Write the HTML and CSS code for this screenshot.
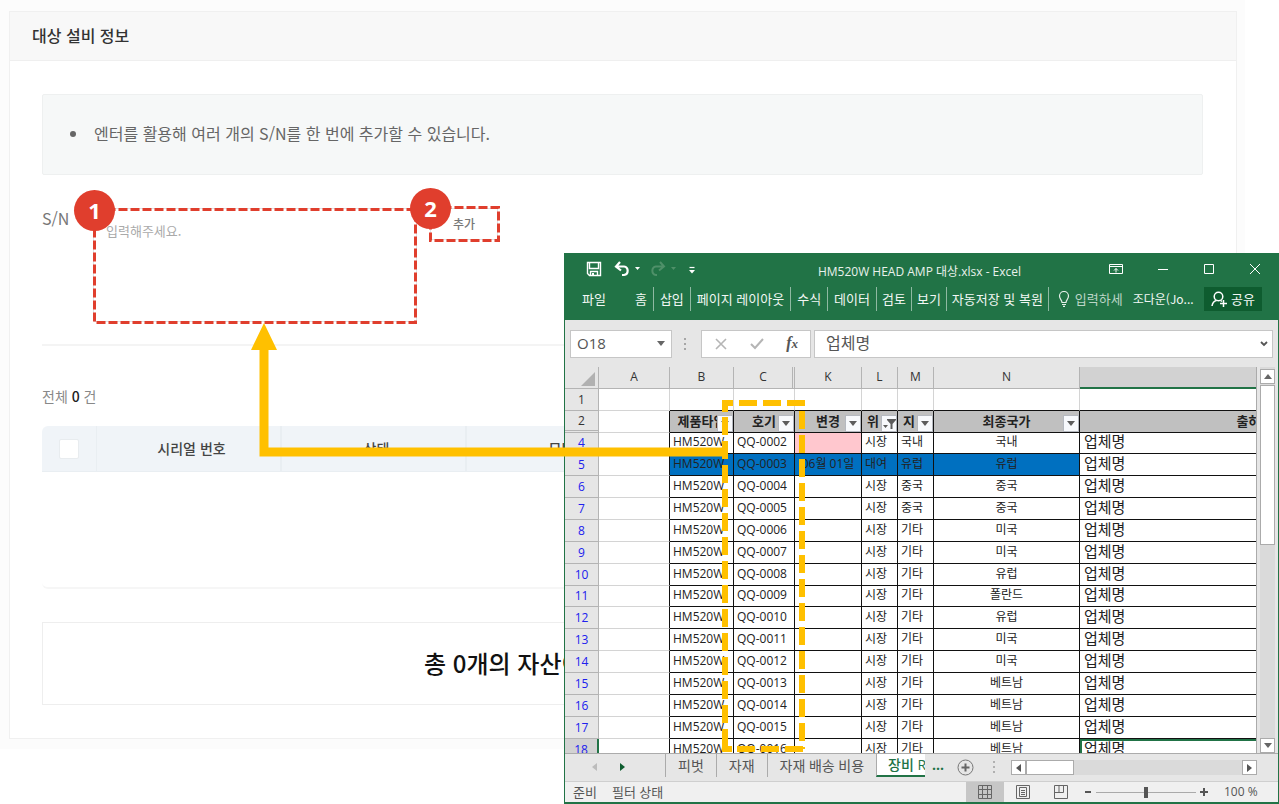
FILE: index.html
```html
<!DOCTYPE html>
<html lang="ko">
<head>
<meta charset="utf-8">
<title>대상 설비 정보</title>
<link rel="stylesheet" href="styles.css">
</head>
<body>
<main class="page">
  <section class="panel">
    <h1 class="panel-title">대상 설비 정보</h1>
    <div class="panel-body">
      <ul class="notice"><li>엔터를 활용해 여러 개의 S/N를 한 번에 추가할 수 있습니다.</li></ul>
      <div class="sn-row">
        <label class="sn-label" for="sn">S/N</label>
        <textarea class="sn-input" id="sn" placeholder="입력해주세요."></textarea>
        <button class="add-button" type="button">추가</button>
      </div>
      <p class="count">전체 <b>0</b> 건</p>
      <table class="assets">
        <thead>
          <tr><th class="check"><input type="checkbox" aria-label="전체 선택"></th><th>시리얼 번호</th><th>상태</th><th>모델</th><th class="rest"></th></tr>
        </thead>
        <tbody><tr><td colspan="5">데이터가 없습니다.</td></tr></tbody>
      </table>
      <p class="total">총 0개의 자산이</p>
    </div>
  </section>
</main>

<section class="excel" aria-label="Excel">
  <header class="ribbon">
    <div class="titlebar">
      <div class="quick">
        <button type="button" aria-label="저장"><svg width="16" height="16" viewBox="0 0 16 16"><path d="M1.500 1.500h13v13h-11l-2-2zM3.500 1.500v6h9v-6M4.500 14.500v-4h7v4" fill="none" stroke="#fff" stroke-width="1.400"/><path d="M6 12h2v3H6z" fill="#fff"/></svg></button>
        <button type="button" aria-label="실행 취소"><svg width="26" height="16" viewBox="0 0 26 16"><path d="M6 1L2 5.500l5 4M2.500 5.500H10a4.300 4.300 0 0 1 0 8.500H8" fill="none" stroke="#fff" stroke-width="2.200"/><path d="M21 6h5l-2.500 3z" fill="#fff"/></svg></button>
        <button type="button" aria-label="다시 실행" disabled><svg width="26" height="16" viewBox="0 0 26 16"><path d="M10 1l4 4.500-5 4M13.500 5.500H6A4.300 4.300 0 0 0 6 14h1" fill="none" stroke="#4f9069" stroke-width="2"/><path d="M21 6h5l-2.500 3z" fill="#4f9069"/></svg></button>
        <button type="button" aria-label="사용자 지정"><svg width="8" height="16" viewBox="0 0 8 16"><path d="M1.500 6.500h5" stroke="#fff" stroke-width="1.200"/><path d="M1 9h6l-3 3.500z" fill="#fff"/></svg></button>
      </div>
      <div class="doc-title">HM520W HEAD AMP 대상.xlsx - Excel</div>
      <div class="win-buttons">
        <button type="button" aria-label="리본 표시"><svg width="14" height="12" viewBox="0 0 14 12"><path d="M.5 1.500h13v9H.5zM.5 3.500h13M7 9.500v-4M5 7.500l2-2 2 2" fill="none" stroke="#fff"/></svg></button>
        <button type="button" aria-label="최소화"><svg width="12" height="12" viewBox="0 0 12 12"><path d="M1 6.500h10" stroke="#fff"/></svg></button>
        <button type="button" aria-label="최대화"><svg width="12" height="12" viewBox="0 0 12 12"><path d="M1.500 1.500h9v9h-9z" fill="none" stroke="#fff"/></svg></button>
        <button type="button" aria-label="닫기"><svg width="12" height="12" viewBox="0 0 12 12"><path d="M1 1l10 10M11 1L1 11" stroke="#fff"/></svg></button>
      </div>
    </div>
    <nav class="menus">
      <button class="file" type="button">파일</button>
      <button type="button">홈</button>
      <button type="button">삽입</button>
      <button type="button">페이지 레이아웃</button>
      <button type="button">수식</button>
      <button type="button">데이터</button>
      <button class="tight" type="button">검토</button>
      <button class="tight" type="button">보기</button>
      <button class="tight" type="button">자동저장 및 복원</button>
      <button class="tell" type="button"><svg width="12" height="16" viewBox="0 0 12 16"><path d="M4 11.500C4 9 1.500 8 1.500 5a4.500 4.500 0 0 1 9 0c0 3-2.500 4-2.500 6.500zM4 13.500h4M5 15.300h2" fill="none" stroke="#e6f0ea" stroke-width="1.200"/></svg>입력하세</button>
      <span class="user">조다운(Jo...</span>
      <button class="share" type="button"><svg width="16" height="16" viewBox="0 0 16 16"><circle cx="7.500" cy="5.500" r="4.300" fill="none" stroke="#fff" stroke-width="1.500"/><path d="M1 15c.5-3 2.200-5 4.500-5.500M9.500 9.500l1.500 1M9 12.500h7M12.500 9v7" fill="none" stroke="#fff" stroke-width="1.500"/></svg>공유</button>
    </nav>
  </header>

  <div class="formula">
    <div class="name-box"><input type="text" value="O18" aria-label="이름 상자"><svg width="8" height="5" viewBox="0 0 8 5"><path d="M0 0h8L4 5z" fill="#666"/></svg></div>
    <svg class="grip" width="3" height="12" viewBox="0 0 3 12"><path d="M0 0h2v2H0zM0 5h2v2H0zM0 10h2v2H0z" fill="#a6a6a6"/></svg>
    <div class="fx-box">
      <button type="button" aria-label="취소"><svg width="12" height="12" viewBox="0 0 12 12"><path d="M1 1l10 10M11 1L1 11" stroke="#b5b5b5" stroke-width="1.600"/></svg></button>
      <button type="button" aria-label="입력"><svg width="14" height="12" viewBox="0 0 14 12"><path d="M1 6l4 4 8-9" fill="none" stroke="#b5b5b5" stroke-width="2"/></svg></button>
      <button class="fx" type="button">f<small>x</small></button>
    </div>
    <div class="formula-input"><input type="text" value="업체명" aria-label="수식 입력줄"><svg width="8" height="6" viewBox="0 0 8 6"><path d="M1 1l3 3 3-3" fill="none" stroke="#555" stroke-width="1.800"/></svg></div>
  </div>

  <div class="sheet-area">
    <div class="sheet-view">
      <table class="sheet">
        <colgroup><col class="c-head"><col class="c-a"><col class="c-b"><col class="c-c"><col class="c-k"><col class="c-l"><col class="c-l"><col class="c-n"><col class="c-o"></colgroup>
        <thead>
          <tr><th class="corner"><svg width="14" height="14" viewBox="0 0 14 14"><path d="M14 0v14H0z" fill="#b1b1b1"/></svg></th><th>A</th><th>B</th><th class="folded">C</th><th>K</th><th>L</th><th>M</th><th>N</th><th class="chosen"></th></tr>
        </thead>
        <tbody>
          <tr class="blank"><th>1</th><td></td><td></td><td></td><td></td><td></td><td></td><td></td><td></td></tr>
          <tr class="titles"><th>2</th><td></td>
            <td>제품타입<button type="button" aria-label="필터"><svg width="8" height="5" viewBox="0 0 8 5"><path d="M0 0h8L4 5z"/></svg></button></td>
            <td>호기<button type="button" aria-label="필터"><svg width="8" height="5" viewBox="0 0 8 5"><path d="M0 0h8L4 5z"/></svg></button></td>
            <td>변경<button type="button" aria-label="필터"><svg width="8" height="5" viewBox="0 0 8 5"><path d="M0 0h8L4 5z"/></svg></button></td>
            <td class="narrow">위<button type="button" aria-label="필터 적용됨"><svg width="13" height="10" viewBox="0 0 13 10"><path d="M4 0h9v1L9.500 5v5H7.500V5L4 1zM0 6h5L2.500 9z"/></svg></button></td>
            <td class="narrow">지<button type="button" aria-label="필터"><svg width="8" height="5" viewBox="0 0 8 5"><path d="M0 0h8L4 5z"/></svg></button></td>
            <td>최종국가<button type="button" aria-label="필터"><svg width="8" height="5" viewBox="0 0 8 5"><path d="M0 0h8L4 5z"/></svg></button></td>
            <td>출하</td></tr>
          <tr class="short"><th>4</th><td></td><td>HM520W</td><td>QQ-0002</td><td class="pink"></td><td>시장</td><td>국내</td><td>국내</td><td>업체명</td></tr>
          <tr class="loan"><th>5</th><td></td><td>HM520W</td><td>QQ-0003</td><td>06월 01일</td><td>대여</td><td>유럽</td><td>유럽</td><td>업체명</td></tr>
          <tr><th>6</th><td></td><td>HM520W</td><td>QQ-0004</td><td></td><td>시장</td><td>중국</td><td>중국</td><td>업체명</td></tr>
          <tr><th>7</th><td></td><td>HM520W</td><td>QQ-0005</td><td></td><td>시장</td><td>중국</td><td>중국</td><td>업체명</td></tr>
          <tr><th>8</th><td></td><td>HM520W</td><td>QQ-0006</td><td></td><td>시장</td><td>기타</td><td>미국</td><td>업체명</td></tr>
          <tr><th>9</th><td></td><td>HM520W</td><td>QQ-0007</td><td></td><td>시장</td><td>기타</td><td>미국</td><td>업체명</td></tr>
          <tr><th>10</th><td></td><td>HM520W</td><td>QQ-0008</td><td></td><td>시장</td><td>기타</td><td>유럽</td><td>업체명</td></tr>
          <tr class="short"><th>11</th><td></td><td>HM520W</td><td>QQ-0009</td><td></td><td>시장</td><td>기타</td><td>폴란드</td><td>업체명</td></tr>
          <tr><th>12</th><td></td><td>HM520W</td><td>QQ-0010</td><td></td><td>시장</td><td>기타</td><td>유럽</td><td>업체명</td></tr>
          <tr><th>13</th><td></td><td>HM520W</td><td>QQ-0011</td><td></td><td>시장</td><td>기타</td><td>미국</td><td>업체명</td></tr>
          <tr><th>14</th><td></td><td>HM520W</td><td>QQ-0012</td><td></td><td>시장</td><td>기타</td><td>미국</td><td>업체명</td></tr>
          <tr><th>15</th><td></td><td>HM520W</td><td>QQ-0013</td><td></td><td>시장</td><td>기타</td><td>베트남</td><td>업체명</td></tr>
          <tr><th>16</th><td></td><td>HM520W</td><td>QQ-0014</td><td></td><td>시장</td><td>기타</td><td>베트남</td><td>업체명</td></tr>
          <tr><th>17</th><td></td><td>HM520W</td><td>QQ-0015</td><td></td><td>시장</td><td>기타</td><td>베트남</td><td>업체명</td></tr>
          <tr class="active-row"><th>18</th><td></td><td>HM520W</td><td>QQ-0016</td><td></td><td>시장</td><td>기타</td><td>베트남</td><td>업체명</td></tr>
        </tbody>
      </table>
    </div>
    <div class="vscroll">
      <button type="button" aria-label="위로"><svg width="8" height="5" viewBox="0 0 8 5"><path d="M0 5h8L4 0z" fill="#666"/></svg></button>
      <div class="vthumb"></div>
      <button class="down" type="button" aria-label="아래로"><svg width="8" height="5" viewBox="0 0 8 5"><path d="M0 0h8L4 5z" fill="#666"/></svg></button>
    </div>
  </div>

  <div class="tabs">
    <div class="tab-arrows">
      <svg width="5" height="8" viewBox="0 0 5 8"><path d="M5 0v8L0 4z" fill="#bcbcbc"/></svg>
      <svg width="5" height="8" viewBox="0 0 5 8"><path d="M0 0v8l5-4z" fill="#0e5c2f"/></svg>
    </div>
    <button type="button">피벗</button>
    <button type="button">자재</button>
    <button type="button">자재 배송 비용</button>
    <button class="current" type="button">장비 R</button>
    <span class="more">...</span>
    <button class="new" type="button" aria-label="새 시트"><svg width="17" height="17" viewBox="0 0 17 17"><circle cx="8.500" cy="8.500" r="7.500" fill="none" stroke="#777"/><path d="M8.500 4.500v8M4.500 8.500h8" stroke="#666" stroke-width="2"/></svg></button>
    <svg class="tab-grip" width="3" height="12" viewBox="0 0 3 12"><path d="M0 0h2v2H0zM0 5h2v2H0zM0 10h2v2H0z" fill="#b0b0b0"/></svg>
    <div class="hscroll">
      <button type="button" aria-label="왼쪽"><svg width="5" height="8" viewBox="0 0 5 8"><path d="M5 0v8L0 4z" fill="#555"/></svg></button>
      <div class="hthumb"></div>
      <button class="right" type="button" aria-label="오른쪽"><svg width="5" height="8" viewBox="0 0 5 8"><path d="M0 0v8l5-4z" fill="#555"/></svg></button>
    </div>
  </div>

  <footer class="status">
    <span>준비</span><span class="filter-state">필터 상태</span>
    <button class="view on" type="button" aria-label="기본"><svg width="14" height="14" viewBox="0 0 14 14"><path d="M.5.5h13v13H.5zM.5 4.500h13M.5 9.500h13M4.500.5v13M9.500.5v13" fill="none" stroke="#666"/></svg></button>
    <button class="view" type="button" aria-label="페이지 레이아웃"><svg width="14" height="14" viewBox="0 0 14 14"><path d="M.5.5h13v13H.5zM3.500 2.500h7v9h-7zM5 5.500h4M5 7.500h4M5 9.500h4" fill="none" stroke="#666"/></svg></button>
    <button class="view" type="button" aria-label="페이지 나누기"><svg width="14" height="14" viewBox="0 0 14 14"><path d="M.5.5h13v13H.5zM.5 7.500h9v-7M5 .5v7" fill="none" stroke="#666"/></svg></button>
    <button class="zoom-step" type="button" aria-label="축소"><svg width="8" height="8" viewBox="0 0 8 8"><path d="M1 4h6" stroke="#555" stroke-width="2"/></svg></button>
    <input class="zoom" type="range" min="0" max="100" value="50" aria-label="확대/축소">
    <button class="zoom-step" type="button" aria-label="확대"><svg width="8" height="8" viewBox="0 0 8 8"><path d="M0 4h8M4 0v8" stroke="#555" stroke-width="2"/></svg></button>
    <span class="percent">100 %</span>
  </footer>
</section>

<svg class="callouts" width="820" height="760" viewBox="0 0 820 760" aria-hidden="true">
  <g fill="none" stroke="#e03e2d" stroke-width="3" stroke-dasharray="9 3">
    <rect x="94.500" y="209.500" width="321" height="113"/>
    <rect x="430.500" y="207.500" width="68" height="33"/>
  </g>
  <path d="M264 323l13 27h-8.500v97.500H725v9H259.500V350H251z" fill="#ffc000"/>
  <g fill="none" stroke="#ffc000" stroke-width="6" stroke-dasharray="18 6">
    <path d="M722 403h11M739 403h66"/>
    <path d="M725 400v12" stroke-dasharray="none"/>
    <path d="M725 417v332M802 411v338"/>
    <path d="M722 749h10M737 749h68"/>
  </g>
</svg>
<span class="badge badge-one">1</span>
<span class="badge badge-two">2</span>
</body>
</html>
```
FILE: styles.css
```css
* { box-sizing: border-box; }
body { margin: 0; position: relative; min-height: 100vh; background: #fff; font-family: "Noto Sans CJK KR", sans-serif; color: #666; }
button, input, textarea { font: inherit; color: inherit; }
button { border: 0; background: none; padding: 0; }
svg { display: block; flex: none; }

.page { margin-right: 34px; padding: 11px 8px 10px 9px; background: #fcfcfc; }
.panel { border: 1px solid #f0f0f0; background: #fff; }
.panel-title { margin: 0; padding: 11px 22px 13px; border-bottom: 1px solid #efefef; background: #f8f8f8; font-size: 16px; line-height: 24px; font-weight: 500; color: #333; }
.panel-body { padding: 33px 33px 33px 32px; }
.notice { margin: 0; padding: 26px 27px 28px; border: 1px solid #eef0f0; border-radius: 2px; background: #f6f8f8; list-style: none; font-size: 16px; line-height: 25px; color: #666; }
.notice li { display: flex; align-items: center; gap: 18px; }
.notice li::before { content: ""; width: 6px; height: 6px; border-radius: 50%; background: #666; }
.sn-row { display: flex; align-items: flex-start; padding: 33px 0 22px; border-bottom: 2px solid #f4f4f4; }
.sn-label { width: 51px; font-size: 16px; line-height: 20px; color: #777; }
.sn-input { width: 324px; height: 114px; padding: 12px; border: 1px solid #dfe3e6; border-radius: 2px; background: #fff; resize: none; font-size: 13px; line-height: 20px; }
.sn-input::placeholder { color: #aaa; }
.add-button { margin: 0 0 0 13px; width: 68px; height: 32px; border: 1px solid #dfe3e6; background: #fff; font-size: 12px; line-height: 20px; font-weight: 500; color: #777; }
.count { margin: 0; padding: 40px 0 20px; font-size: 14px; line-height: 20px; color: #888; }
.count b { font-weight: 500; color: #222; }
.assets { width: 100%; table-layout: fixed; border-spacing: 0; border-bottom: 2px solid #f6f6f6; border-radius: 6px; font-size: 14px; line-height: 20px; }
.assets th { width: 185px; height: 46px; padding: 0 0 2px 6px; border-right: 2px solid #e9eef2; border-bottom: 1px solid #e9eef2; background: #f0f4f8; font-weight: 500; color: #444; }
.assets .check { width: 55px; padding: 0; border-right-width: 1px; border-top-left-radius: 6px; }
.assets .rest { width: auto; border-right: 0; }
.check input { display: block; appearance: none; width: 20px; height: 20px; margin: 0 auto; border: 1px solid #e8ecef; border-radius: 2px; background: #fff; }
.assets td { height: 115px; padding: 54px 0 41px; text-align: center; }
.total { margin: 33px 0 0; padding: 20px 0 21px 381px; border: 1px solid #eee; font-size: 24px; line-height: 40px; font-weight: 500; color: #111; white-space: nowrap; }

.excel { position: absolute; top: 253px; left: 564px; right: 0; border: solid #217346; border-width: 0 1px 2px; background: #e6e6e6; font-family: "Open Sans", "Noto Sans CJK KR", sans-serif; overflow: hidden; }
.ribbon { height: 67px; background: #217346; color: #fff; }
.titlebar { display: flex; height: 34px; align-items: center; padding: 0 17px 2px 21px; }
.quick { display: flex; gap: 10px; align-items: center; }
.quick button:first-child { margin-right: 2px; }
.quick button:last-child { margin-left: 2px; }
.doc-title { flex: 1; padding: 6px 0 0 84px; text-align: center; font-size: 12px; line-height: 16px; color: #e9f1ec; white-space: nowrap; }
.win-buttons { display: flex; gap: 34px; margin-left: 50px; }
.menus { display: flex; align-items: center; padding: 0 16px 0 12px; font-family: "Noto Sans CJK KR", sans-serif; font-size: 13px; line-height: 24px; white-space: nowrap; color: #f2f7f4; }
.menus > button { padding: 0 6px; border-right: 1px solid #8fb9a2; }
.menus > .tight { padding: 0 5px; }
.menus .file { padding-left: 5px; border: 0; margin-right: 17px; }
.menus .tell { display: flex; align-items: center; gap: 5px; padding: 0 0 0 9px; border: 0; color: #bcd5c7; }
.user { margin-left: 10px; font-size: 12px; }
.menus .share { display: flex; align-items: center; justify-content: center; gap: 4px; width: 58px; padding: 0; margin-left: auto; border: 0; background: #0e5c2f; }

.formula { display: flex; align-items: center; height: 47px; padding: 0 5px; color: #555; }
.name-box, .fx-box, .formula-input { display: flex; align-items: center; height: 28px; border: 1px solid #c6c6c6; background: #fff; }
.formula input { flex: 1; min-width: 0; border: 0; padding: 0 6px 2px; background: none; font-size: 15px; line-height: 20px; outline: 0; }
.name-box { width: 102px; padding-right: 6px; }
.grip { margin: 0 14px 0 12px; }
.fx-box { width: 110px; padding: 0 12px 0 13px; justify-content: space-between; }
.fx { font: italic bold 16px/20px "Liberation Serif", serif; color: #555; }
.fx small { font-size: 13px; }
.formula-input { flex: 1; margin-left: 3px; padding-right: 4px; }
.formula-input input { padding: 0 11px 2px; font-size: 16px; }

.sheet-area { display: flex; height: 387px; border-bottom: 1px solid #ababab; }
.sheet-view { flex: 1; min-width: 0; overflow: hidden; border-right: 1px solid #ababab; }
.sheet { width: 853px; table-layout: fixed; border-spacing: 0; font-size: 12px; line-height: 18px; color: #222; }
.c-head { width: 34px; } .c-a { width: 71px; } .c-b { width: 64px; } .c-c { width: 61px; }
.c-k { width: 67px; } .c-l { width: 36px; } .c-n { width: 146px; } .c-o { width: 338px; }
.sheet th, .sheet td { height: 22px; padding: 0 0 2px; overflow: hidden; white-space: nowrap; }
.sheet .short th, .sheet .short td { height: 21px; }
.sheet th { border-right: 1px solid #b4b4b4; border-bottom: 1px solid #b4b4b4; background: #e6e6e6; font-weight: 400; }
.sheet thead th { color: #333; }
.sheet tbody th { color: #2020ee; padding-bottom: 0; }
.sheet .blank th, .sheet .titles th { color: #333; }
.sheet .titles th { border-bottom: 3px double #b4b4b4; }
.sheet .corner { padding: 3px 0 0 16px; }
.sheet .folded { border-right: 3px double #b4b4b4; }
.sheet .chosen { background: #d2d2d2; border-bottom: 2px solid #217346; }
.sheet td { border-right: 1px solid #111; border-bottom: 1px solid #111; background: #fff; text-align: center; }
.sheet td:nth-child(2) { border-bottom-color: #d4d4d4; }
.sheet td:nth-child(3), .sheet td:nth-child(4), .sheet td:nth-child(6), .sheet td:nth-child(7) { padding-left: 3px; text-align: left; }
.sheet td:nth-child(9) { padding: 0 0 4px 4px; text-align: left; font-size: 15px; line-height: 16px; }
.sheet .blank td { border-right-color: #d4d4d4; }
.sheet .titles td { position: relative; padding: 0 0 2px; font-size: 13px; line-height: 18px; font-weight: 700; text-align: center; }
.sheet .titles .narrow { padding-left: 5px; text-align: left; }
.sheet .titles td:not(:nth-child(2)) { background: #c0c0c0; }
.titles button { position: absolute; right: 0; bottom: 0; display: grid; place-items: center; width: 16px; height: 17px; border: 1px solid #b5b9c0; background: #f7f9fc; }
.titles button path { fill: #5c5c5c; }
.sheet .pink { background: #ffc7ce; }
.sheet .loan td:nth-child(n+3):nth-child(-n+8) { background: #0070c0; }
.sheet .active-row th { background: #d2d2d2; border-right: 2px solid #217346; }
.sheet .active-row td:last-child { border-top: 2px solid #217346; border-left: 2px solid #217346; padding: 0 0 4px 2px; line-height: 15px; }
.vscroll { display: flex; flex-direction: column; width: 21px; padding: 2px 3px 0; background: linear-gradient(#dadada, #dadada) 3px 0 / 15px 100% no-repeat; }
.vscroll button, .hscroll button { display: grid; place-items: center; width: 15px; height: 15px; flex: none; border: 1px solid #ababab; background: #fff; }
.vthumb { height: 160px; margin-top: 1px; border: 1px solid #ababab; background: #fff; }
.vscroll .down { margin-top: auto; }

.tabs { display: flex; height: 27px; align-items: flex-start; font-size: 14px; line-height: 22px; color: #555; white-space: nowrap; }
.tab-arrows { display: flex; gap: 23px; width: 100px; padding: 9px 0 0 27px; }
.tabs > button { height: 23px; padding: 0 12px; border-left: 1px solid #ababab; }
.tabs .current { width: 49px; padding: 0 0 0 11px; overflow: hidden; border-bottom: 2px solid #217346; background: #fff; color: #217346; font-weight: 500; text-align: left; }
.more { width: 32px; padding-left: 7px; font-weight: 700; color: #217346; }
.tabs .new { padding: 4px 0 0; border: 0; }
.tab-grip { margin: 7px 15px 0 19px; }
.hscroll { display: flex; flex: 1; margin: 6px 21px 0 0; background: #dadada; }
.hthumb { width: 48px; border: 1px solid #ababab; background: #fff; }
.hscroll .right { margin-left: auto; }

.status { display: flex; align-items: center; height: 21px; padding: 0 18px 0 8px; border-top: 1px solid #cfcfcf; background: #f0f0f0; font-size: 13px; line-height: 20px; color: #555; white-space: nowrap; }
.filter-state { margin: 0 auto 0 15px; }
.view { display: grid; place-items: center; width: 38px; height: 20px; }
.view.on { background: #c6c6c6; }
.zoom-step { margin: 0 4px; }
.zoom { appearance: none; width: 100px; height: 12px; margin: 0; background: linear-gradient(#aaa, #aaa) center / 100% 1px no-repeat; }
.zoom::-webkit-slider-thumb { appearance: none; width: 4px; height: 11px; background: #555; }
.percent { width: 36px; margin-left: 12px; font-size: 12px; }

.callouts { position: absolute; top: 0; left: 0; pointer-events: none; }
.badge { position: absolute; width: 41px; height: 41px; border-radius: 50%; background: #e03e2d; color: #fff; font: 700 22px/41px "Open Sans", sans-serif; text-align: center; }
.badge-one { top: 190px; left: 74px; }
.badge-two { top: 188px; left: 410px; }
```
